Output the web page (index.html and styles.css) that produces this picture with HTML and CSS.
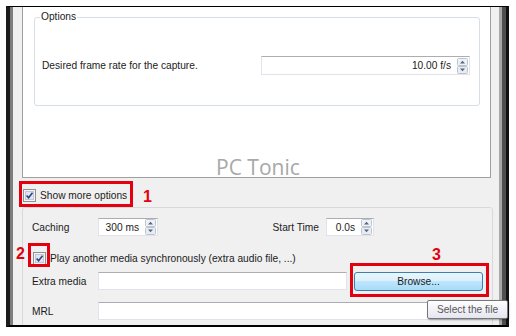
FILE: index.html
```html
<!DOCTYPE html>
<html lang="en">
<head>
    <meta charset="UTF-8">
    <meta name="viewport" content="width=device-width, initial-scale=1.0">
    <title>Open Capture Device - Options</title>
    <link rel="stylesheet" href="styles.css">
</head>
<body>
    <div class="stage">
        <div class="window">
            <div class="chrome">
                <div class="dialog">
                    <div class="panel">
                        <fieldset class="options">
                            <legend>Options</legend>
                            <div class="field-row">
                                <span>Desired frame rate for the capture.</span>
                                <div class="spin rate">
                                    <span>10.00 f/s</span>
                                    <svg class="arrows" viewBox="0 0 11 16"><rect x=".5" y=".5" width="10" height="7" rx="1" fill="#eef2f7" stroke="#bcc5cf"/><rect x=".5" y="8.5" width="10" height="7" rx="1" fill="#e8edf3" stroke="#bcc5cf"/><path d="M3 5.5h5L5.5 2.8z" fill="#56657f"/><path d="M3 10.5h5L5.5 13.2z" fill="#56657f"/></svg>
                                </div>
                            </div>
                        </fieldset>
                    </div>

                    <div class="more">
                        <svg class="check" viewBox="0 0 13 13"><rect x=".5" y=".5" width="12" height="12" fill="#f4f4f6" stroke="#8e8f8f"/><rect x="2.5" y="2.5" width="8" height="8" fill="#e2e6ee" stroke="#c0c6d4"/><path d="M3.6 6.4l2 2.3 3.9-5" fill="none" stroke="#2e4286" stroke-width="1.6"/></svg>
                        <span>Show more options</span>
                    </div>

                    <div class="advanced">
                        <div class="row cache">
                            <span class="lbl">Caching</span>
                            <div class="spin caching">
                                <span>300 ms</span>
                                <svg class="arrows" viewBox="0 0 11 16"><rect x=".5" y=".5" width="10" height="7" rx="1" fill="#eef2f7" stroke="#bcc5cf"/><rect x=".5" y="8.5" width="10" height="7" rx="1" fill="#e8edf3" stroke="#bcc5cf"/><path d="M3 5.5h5L5.5 2.8z" fill="#56657f"/><path d="M3 10.5h5L5.5 13.2z" fill="#56657f"/></svg>
                            </div>
                            <span class="start-lbl">Start Time</span>
                            <div class="spin start">
                                <span>0.0s</span>
                                <svg class="arrows" viewBox="0 0 11 16"><rect x=".5" y=".5" width="10" height="7" rx="1" fill="#eef2f7" stroke="#bcc5cf"/><rect x=".5" y="8.5" width="10" height="7" rx="1" fill="#e8edf3" stroke="#bcc5cf"/><path d="M3 5.5h5L5.5 2.8z" fill="#56657f"/><path d="M3 10.5h5L5.5 13.2z" fill="#56657f"/></svg>
                            </div>
                        </div>
                        <div class="row sync">
                            <svg class="check" viewBox="0 0 13 13"><rect x=".5" y=".5" width="12" height="12" fill="#f4f4f6" stroke="#8e8f8f"/><rect x="2.5" y="2.5" width="8" height="8" fill="#e2e6ee" stroke="#c0c6d4"/><path d="M3.6 6.4l2 2.3 3.9-5" fill="none" stroke="#2e4286" stroke-width="1.6"/></svg>
                            <span>Play another media synchronously (extra audio file, ...)</span>
                        </div>
                        <div class="row extra">
                            <span class="lbl">Extra media</span>
                            <div class="input media"></div>
                            <button class="browse">Browse...</button>
                        </div>
                        <div class="row mrl">
                            <span class="lbl">MRL</span>
                            <div class="input wide"></div>
                        </div>
                    </div>
                </div>
            </div>
        </div>

        <div class="watermark">PC Tonic</div>
        <div class="tip">Select the file</div>

        <div class="mark box1"></div>
        <div class="mark box2"></div>
        <div class="mark box3"></div>
        <div class="num n1">1</div>
        <div class="num n2">2</div>
        <div class="num n3">3</div>
    </div>
</body>
</html>
```

FILE: styles.css
```css
* {
    box-sizing: border-box;
}
body {
    margin: 0;
    background-color: #fff;
    font-family: "Liberation Sans", Arial, sans-serif;
    font-size: 10.2px;
    color: #1b1b1b;
}
.stage {
    position: relative;
    width: 516px;
    height: 336px;
    overflow: hidden;
}

/* window frame stripes */
.window {
    display: flex;
    margin: 6px 0 0 6px;
    width: 503px;
    height: 321px;
    border-top: 1px solid #000;
    border-bottom: 2px solid #000;
    border-left: 4px solid #1c1c1c;
    border-right: 3px solid #111;
}
.chrome {
    flex: 1;
    display: flex;
    border-left: 3px solid #7d7d7d;
    border-right: 4px solid #4f4f4f;
}
.dialog {
    flex: 1;
    background-color: #f0f0f0;
    border-right: 3px solid #a8a8a8;
    padding-left: 9px;
    overflow: hidden;
}

/* upper white panel */
.panel {
    width: 469px;
    height: 171px;
    background-color: #fff;
    border: 1px solid #a0a0a0;
    border-top: none;
    padding: 4px 10px 0 11px;
}
.options {
    margin: 0;
    border: 1px solid #d5dfe5;
    border-radius: 3px;
    padding: 0 9px 30px 7px;
}
.options legend {
    padding: 0 1px;
    margin-left: -2px;
    line-height: 12px;
}
.field-row {
    display: flex;
    justify-content: space-between;
    align-items: center;
    margin-top: 33px;
}

/* spin boxes and inputs */
.spin {
    display: flex;
    align-items: center;
    justify-content: flex-end;
    height: 19px;
    background-color: #fff;
    border: 1px solid #e2e3ea;
    border-top-color: #abadb3;
    padding-right: 1px;
}
.spin span {
    padding-right: 6px;
}
.arrows {
    width: 11px;
    height: 16px;
}
.spin.rate {
    width: 209px;
}
.spin.caching {
    width: 60px;
    height: 18px;
}
.spin.start {
    width: 48px;
    height: 18px;
    margin-right: 109px;
}
.input {
    height: 18px;
    background-color: #fff;
    border: 1px solid #e2e3ea;
    border-top-color: #abadb3;
}
.input.media {
    width: 249px;
}
.input.wide {
    flex: 1;
}

/* check rows */
.check {
    width: 13px;
    height: 13px;
    flex: none;
}
.more {
    display: flex;
    align-items: center;
    gap: 4px;
    height: 29px;
    padding: 6px 0 0 1px;
}

/* lower group */
.advanced {
    width: 471px;
    height: 200px;
    border: 1px solid #d9d9d9;
    border-radius: 3px;
    padding: 10px 9px 0 9px;
}
.row {
    display: flex;
    align-items: center;
    height: 18px;
}
.lbl {
    width: 66px;
    flex: none;
}
.start-lbl {
    margin-left: auto;
    margin-right: 7px;
}
.row.sync {
    height: 16px;
    margin-top: 14px;
    padding-left: 1px;
    gap: 4px;
}
.row.extra {
    margin-top: 6px;
    gap: 7px;
}
.row.extra .lbl {
    width: 59px;
}
.row.mrl {
    margin-top: 12px;
}
.browse {
    width: 129px;
    height: 19px;
    border: 1px solid #3c7fb1;
    border-radius: 3px;
    background: linear-gradient(#eaf6fd, #d9f0fc 50%, #bee6fd 50%, #a9dbf6);
    font: inherit;
    color: #1b1b1b;
    padding: 0;
}

/* overlays */
.watermark {
    position: absolute;
    left: 216px;
    top: 157px;
    font-family: "Open Sans", sans-serif;
    font-size: 21px;
    line-height: 1;
    color: #a8a8a8;
}
.tip {
    position: absolute;
    left: 427px;
    top: 300px;
    width: 81px;
    height: 19px;
    display: flex;
    align-items: center;
    justify-content: center;
    border: 1px solid #767676;
    border-radius: 2px;
    background: linear-gradient(#fff, #e4e5f0);
    color: #575757;
    box-shadow: 1px 1px 2px rgba(0,0,0,0.35);
}
.mark {
    position: absolute;
    border: 3px solid #e3000f;
}
.box1 { left: 19px; top: 181px; width: 114px; height: 26px; }
.box2 { left: 28px; top: 243px; width: 22px; height: 24px; }
.box3 { left: 350px; top: 263px; width: 139px; height: 34px; }
.num {
    position: absolute;
    color: #e3000f;
    font-weight: bold;
    font-size: 16px;
    line-height: 16px;
}
.n1 { left: 143px; top: 189px; }
.n2 { left: 16px; top: 246px; }
.n3 { left: 432px; top: 247px; }
```
